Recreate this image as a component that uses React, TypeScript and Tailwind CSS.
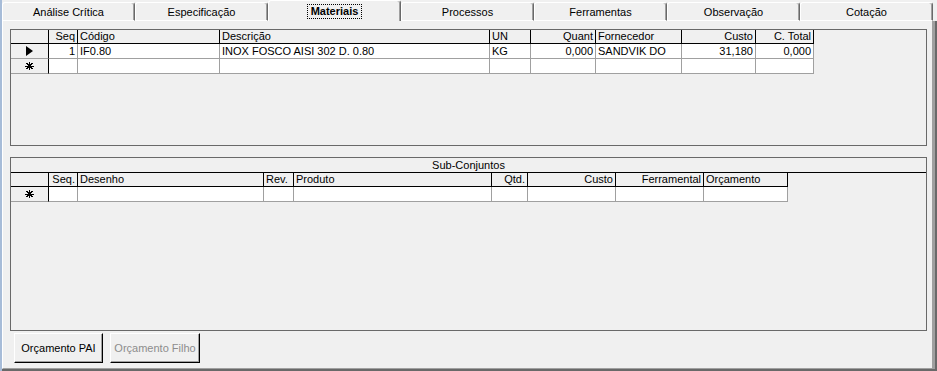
import React from "react";

type Col = { label: string; w: string; right?: boolean };

const matCols: Col[] = [
  { label: "Seq", w: "w-[29px]", right: true },
  { label: "Código", w: "w-[142px]" },
  { label: "Descrição", w: "w-[270px]" },
  { label: "UN", w: "w-[41px]" },
  { label: "Quant", w: "w-[65px]", right: true },
  { label: "Fornecedor", w: "w-[86px]" },
  { label: "Custo", w: "w-[74px]", right: true },
  { label: "C. Total", w: "w-[58px]", right: true },
];

const matRow = [
  "1",
  "IF0.80",
  "INOX FOSCO AISI 302 D. 0.80",
  "KG",
  "0,000",
  "SANDVIK DO",
  "31,180",
  "0,000",
];

const subCols: Col[] = [
  { label: "Seq.", w: "w-[29px]", right: true },
  { label: "Desenho", w: "w-[186px]" },
  { label: "Rev.", w: "w-[30px]" },
  { label: "Produto", w: "w-[198px]" },
  { label: "Qtd.", w: "w-[36px]", right: true },
  { label: "Custo", w: "w-[88px]", right: true },
  { label: "Ferramental", w: "w-[88px]", right: true },
  { label: "Orçamento", w: "w-[84px]" },
];

const tabs = [
  "Análise Crítica",
  "Especificação",
  "Materiais",
  "Processos",
  "Ferramentas",
  "Observação",
  "Cotação",
];

function Arrow() {
  return (
    <svg width="7" height="10" viewBox="0 0 7 10">
      <polygon points="0,0 7,5 0,10" fill="black" />
    </svg>
  );
}

function Star() {
  return (
    <svg width="9" height="8" viewBox="0 0 9 8" shapeRendering="crispEdges">
      <g stroke="black" strokeWidth="1">
        <line x1="0" y1="4" x2="9" y2="4" />
        <line x1="4.5" y1="0" x2="4.5" y2="8" />
        <line x1="1.5" y1="1" x2="7.5" y2="7" />
        <line x1="7.5" y1="1" x2="1.5" y2="7" />
      </g>
    </svg>
  );
}

function HeaderRow({ cols }: { cols: Col[] }) {
  return (
    <div className="flex h-[14px] w-fit border-b border-black">
      <div className="w-[38px] h-full border-r border-black" />
      {cols.map((c) => (
        <div
          key={c.label}
          className={`${c.w} h-full border-r border-black pl-[2px] pr-[2px] leading-[13px] whitespace-nowrap overflow-hidden ${
            c.right ? "text-right" : ""
          }`}
        >
          {c.label}
        </div>
      ))}
    </div>
  );
}

function DataRow({
  cols,
  values,
  marker,
}: {
  cols: Col[];
  values?: string[];
  marker: "arrow" | "star";
}) {
  return (
    <div className="flex h-[15px] w-fit">
      <div className="w-[38px] h-full border-r border-black border-b border-b-[#a0a0a0] bg-[#f0f0f0] flex items-center justify-center">
        {marker === "arrow" ? <Arrow /> : <Star />}
      </div>
      {cols.map((c, i) => (
        <div
          key={c.label}
          className={`${c.w} h-full bg-white border-r border-b border-[#a0a0a0] pl-[2px] pr-[2px] leading-[14px] whitespace-nowrap overflow-hidden ${
            c.right ? "text-right" : ""
          }`}
        >
          {values ? values[i] : ""}
        </div>
      ))}
    </div>
  );
}

export default function App() {
  return (
    <div className="w-[937px] h-[371px] bg-[#f0f0f0] flex overflow-hidden text-[11px] text-black font-['Liberation_Sans',Arial,sans-serif]">
      <div className="w-[2px] h-full bg-[#a7bcd8]" />

      <div className="w-[935px] flex flex-col">
        {/* tab strip */}
        <div className="flex h-[21px]">
          {tabs.map((t) =>
            t === "Materiais" ? (
              <div
                key={t}
                className="w-[133px] h-[21px] border-t border-l border-r border-t-white border-l-white border-r-[#696969] rounded-t-[3px] shadow-[inset_-1px_0_0_#a0a0a0] flex justify-center pt-[3px]"
              >
                <span className="h-[15px] px-[3px] leading-[13px] font-bold border border-dotted border-black">
                  {t}
                </span>
              </div>
            ) : (
              <div
                key={t}
                className="w-[133px] h-[19px] mt-[2px] border-t border-l border-r border-b border-t-white border-l-white border-b-white border-r-[#696969] rounded-t-[3px] shadow-[inset_-1px_0_0_#a0a0a0] flex items-center justify-center leading-[14px]"
              >
                {t}
              </div>
            )
          )}
        </div>

        {/* panel */}
        <div className="h-[350px] border-r-2 border-b-2 border-[#696969]">
          <div className="h-full border-l border-l-white border-r-[3px] border-b border-r-[#a0a0a0] border-b-[#a0a0a0] pl-[7px] pt-[8px] flex flex-col">
            {/* Materiais grid */}
            <div className="w-[917px] h-[117px] border border-[#696969] bg-[#f0f0f0]">
              <HeaderRow cols={matCols} />
              <DataRow cols={matCols} values={matRow} marker="arrow" />
              <DataRow cols={matCols} marker="star" />
            </div>

            {/* Sub-Conjuntos grid */}
            <div className="w-[917px] h-[174px] mt-[11px] border border-[#696969] bg-[#f0f0f0]">
              <div className="h-[15px] border-b border-black text-center leading-[14px]">
                Sub-Conjuntos
              </div>
              <HeaderRow cols={subCols} />
              <DataRow cols={subCols} marker="star" />
            </div>

            <div className="flex gap-[7px] mt-[2px] ml-[4px]">
              <button className="w-[89px] h-[30px] border border-t-white border-l-white border-r-black border-b-black shadow-[inset_-1px_-1px_0_#a0a0a0] bg-[#f0f0f0] text-black leading-[14px]">
                Orçamento PAI
              </button>
              <button
                disabled
                className="w-[90px] h-[30px] border border-t-white border-l-white border-r-black border-b-black shadow-[inset_-1px_-1px_0_#a0a0a0] bg-[#f0f0f0] text-[#8d8d8d] leading-[14px]"
              >
                Orçamento Filho
              </button>
            </div>
          </div>
        </div>
      </div>
    </div>
  );
}
